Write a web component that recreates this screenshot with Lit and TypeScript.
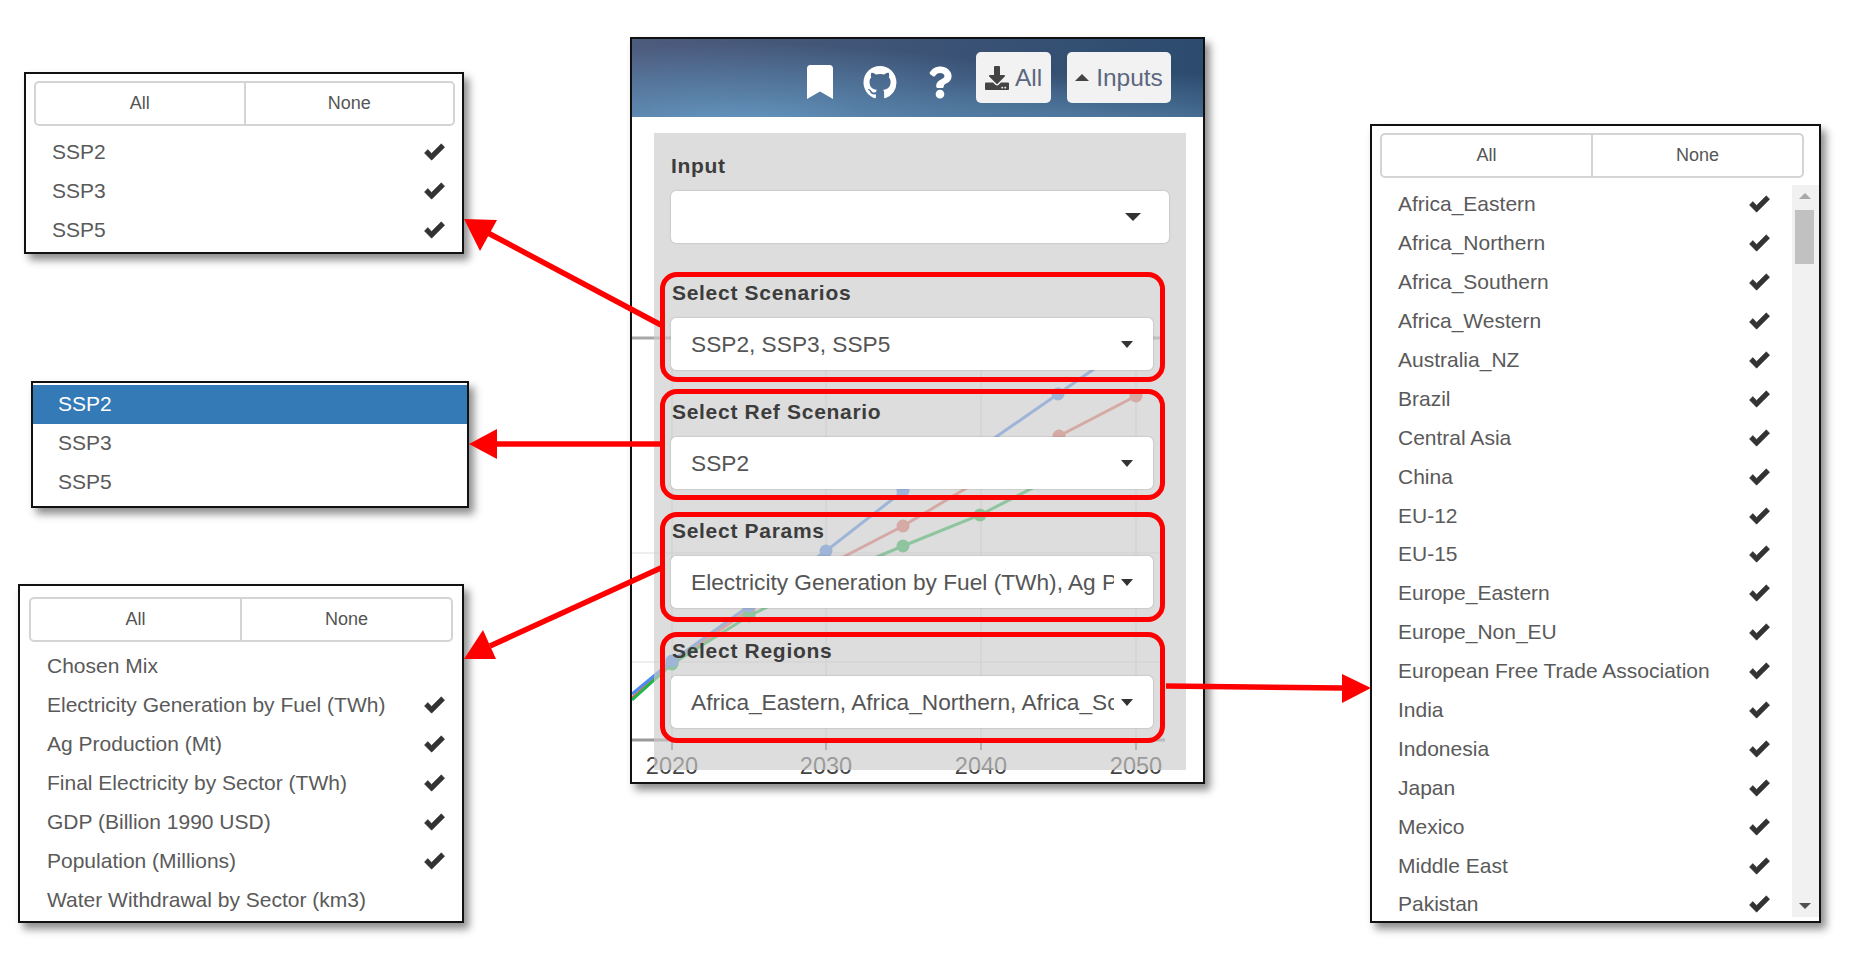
import { LitElement, html, css, svg } from 'lit';
import { customElement } from 'lit/decorators.js';

const SCENARIOS = ['SSP2', 'SSP3', 'SSP5'];
const PARAMS: [string, boolean][] = [
  ['Chosen Mix', false],
  ['Electricity Generation by Fuel (TWh)', true],
  ['Ag Production (Mt)', true],
  ['Final Electricity by Sector (TWh)', true],
  ['GDP (Billion 1990 USD)', true],
  ['Population (Millions)', true],
  ['Water Withdrawal by Sector (km3)', false],
];
const REGIONS = [
  'Africa_Eastern', 'Africa_Northern', 'Africa_Southern', 'Africa_Western', 'Australia_NZ',
  'Brazil', 'Central Asia', 'China', 'EU-12', 'EU-15', 'Europe_Eastern', 'Europe_Non_EU',
  'European Free Trade Association', 'India', 'Indonesia', 'Japan', 'Mexico', 'Middle East', 'Pakistan',
];

// chart series, in page coordinates
const SERIES: { color: string; pts: number[][] }[] = [
  { color: '#e86a5c', pts: [[632, 698], [672, 663], [749, 610], [826, 566], [903, 526], [980, 480], [1059, 436], [1136, 396]] },
  { color: '#1fb84a', pts: [[632, 700], [672, 664], [749, 616], [826, 578], [903, 546], [980, 515], [1058, 475]] },
  { color: '#4a8cf0', pts: [[632, 694], [672, 661], [749, 606], [826, 551], [903, 491], [980, 448], [1058, 394], [1136, 340]] },
];
const YEARS: [string, number][] = [['2020', 672], ['2030', 826], ['2040', 981], ['2050', 1136]];

@customElement('app-root')
export class AppRoot extends LitElement {
  static styles = css`
    :host {
      display: block;
      position: relative;
      width: 1851px;
      height: 954px;
      overflow: hidden;
      background: #fff;
      font-family: 'Liberation Sans', Arial, sans-serif;
      color: #555;
    }

    /* the figure is a free canvas: each window sits at its own place */
    .win {
      position: absolute;
      box-sizing: border-box;
      background: #fff;
      border: 2px solid #111;
      box-shadow: 5px 6px 8px rgba(0, 0, 0, 0.45);
      overflow: hidden;
    }
    .pop-scen { left: 24px; top: 72px; width: 440px; height: 182px; padding: 7px 8px; }
    .pop-ref { left: 31px; top: 381px; width: 438px; height: 127px; padding-top: 2px; }
    .pop-params { left: 18px; top: 584px; width: 446px; height: 339px; padding: 11px 9px; }
    .pop-regions { left: 1370px; top: 124px; width: 451px; height: 799px; padding: 7px 8px; }
    .main { left: 630px; top: 37px; width: 575px; height: 747px; }

    .btns {
      display: flex;
      height: 45px;
      box-sizing: border-box;
      border: 2px solid #d4d4d4;
      border-radius: 5px;
      margin-bottom: 7px;
      width: 421px;
    }
    .pop-params .btns { width: 424px; margin-bottom: 5px; }
    .pop-regions .btns { width: 424px; }
    .btns span {
      flex: 1;
      display: flex;
      align-items: center;
      justify-content: center;
      font-size: 18px;
      color: #555;
    }
    .btns span + span { border-left: 2px solid #d4d4d4; }

    .row {
      display: flex;
      align-items: center;
      height: 38.97px;
      font-size: 21px;
      padding-left: 18px;
      color: #5a5a5a;
      white-space: nowrap;
    }
    .row .name { flex: 1; }
    .row svg { width: 21px; height: 18px; fill: #333; stroke: #333; stroke-width: 0.6; stroke-linejoin: round; margin-right: 9px; }
    .pop-params .row svg { margin-right: 8px; }

    .pop-ref .row { padding-left: 25px; }
    .pop-ref .row.on { background: #337ab7; color: #fff; }

    .regions { display: flex; height: 732px; }
    .regions .list { flex: 1; overflow: hidden; }
    .regions .row { height: 38.9px; }
    .regions .row svg { margin-right: 22px; }
    .scroll {
      position: relative;
      width: 27px;
      margin-right: -8px;
      background: #f1f1f1;
    }
    .scroll i {
      position: absolute;
      left: 7px;
      border: 6px solid transparent;
      border-top: 0;
    }
    .scroll .up { top: 8px; border-bottom: 6px solid #a8a8a8; }
    .scroll .down { bottom: 8px; border-bottom: 0; border-top: 6px solid #505050; }
    .scroll b {
      position: absolute;
      left: 3px;
      width: 19px;
      top: 25px;
      height: 54px;
      background: #c1c1c1;
    }

    .chart { position: absolute; left: 0; top: 0; width: 571px; height: 743px; }
    .chart text { font-size: 23.5px; fill: #444; text-anchor: middle; }

    header {
      position: relative;
      display: flex;
      align-items: center;
      justify-content: flex-end;
      height: 78px;
      padding-right: 32px;
      box-sizing: border-box;
      background:
        radial-gradient(ellipse 70% 110% at 18% 115%, #659ac4 0, rgba(101, 154, 196, 0) 100%),
        radial-gradient(ellipse 50% 90% at 85% 130%, #5b86ad 0, rgba(91, 134, 173, 0) 100%),
        linear-gradient(100deg, #4d5b7d, #2b4b6e);
    }
    header svg.ico { fill: #fff; display: block; }
    .ico-book { width: 26px; height: 34px; margin: 8px 30px 0 0; }
    .ico-git { width: 34px; height: 33px; margin: 8px 31px 0 0; }
    .ico-help { width: 24px; height: 33px; margin: 8px 24px 0 0; }
    .hbtn {
      display: flex;
      align-items: center;
      justify-content: center;
      height: 51px;
      margin-top: -1px;
      background: #f2f2f2;
      border-radius: 5px;
      color: #5c6780;
      font-size: 24.5px;
    }
    .hbtn.all { width: 75px; margin-right: 16px; gap: 6px; }
    .hbtn.all svg { width: 24px; height: 24px; fill: #444; }
    .hbtn.inputs { width: 104px; gap: 7px; }
    .hbtn.inputs i {
      border: 7px solid transparent;
      border-top: 0;
      border-bottom: 7px solid #444;
    }

    .panel {
      position: relative;
      box-sizing: border-box;
      width: 532px;
      height: 637px;
      margin: 16px 0 0 22px;
      padding: 21px 0 0 6px;
      background: rgba(203, 203, 203, 0.65);
    }
    label {
      display: block;
      height: 24px;
      line-height: 24px;
      font-size: 21px;
      font-weight: bold;
      letter-spacing: 0.7px;
      color: #3c3c3c;
      white-space: nowrap;
    }
    .input-group { width: 498px; margin: 0 0 29px 11px; }
    .select {
      display: flex;
      align-items: center;
      box-sizing: border-box;
      height: 52px;
      margin-top: 13px;
      padding: 0 20px;
      background: #fff;
      border-radius: 5px;
      box-shadow: 0 0 2px rgba(0, 0, 0, 0.25);
      font-size: 22.7px;
      color: #555;
    }
    .select .val { flex: 1; overflow: hidden; white-space: nowrap; margin-right: 7px; }
    .select i {
      flex: none;
      border: 6px solid transparent;
      border-bottom: 0;
      border-top: 7px solid #333;
    }
    .input-group .select { padding-right: 28px; }
    .input-group .select i { border-width: 8px 8px 0; }

    .group {
      box-sizing: border-box;
      width: 505px;
      height: 110px;
      padding: 4px 7px 0 6px;
      border: 5px solid #f00;
      border-radius: 17px;
    }
    .group label { margin-left: 1px; }
    .group.ref { margin-top: 7px; height: 111px; padding-top: 6px; }
    .group.params { margin-top: 12px; padding-top: 2px; }
    .group.regions-box { margin-top: 10px; height: 111px; padding-top: 2px; }

    .arrows { position: absolute; left: 0; top: 0; width: 1851px; height: 954px; pointer-events: none; }
  `;

  private check() {
    return html`<svg viewBox="0 0 21 18"><path d="M.5 10 3.8 6.6 7.6 10.4 17.3.8 20.6 4.2 7.6 17.2Z"></path></svg>`;
  }

  private allNone() {
    return html`<div class="btns"><span>All</span><span>None</span></div>`;
  }

  private row(name: string, checked: boolean) {
    return html`<div class="row"><span class="name">${name}</span>${checked ? this.check() : ''}</div>`;
  }

  private select(value: string) {
    return html`<div class="select"><span class="val">${value}</span><i></i></div>`;
  }

  private renderChart() {
    return html`
      <svg class="chart" viewBox="632 39 571 743">
        <g fill="none">
          <path d="M632 553H1165M632 662H1165" stroke="#eee" stroke-width="2"></path>
          ${YEARS.map(([, x]) => svg`<path d="M${x} 340V740" stroke="#d8d8d8" stroke-width="1"></path>`)}
          <path d="M632 338H1165" stroke="#a8a8a8" stroke-width="3"></path>
          <path d="M632 740H1165" stroke="#9a9a9a" stroke-width="3"></path>
          ${YEARS.map(([, x]) => svg`<path d="M${x} 741V750" stroke="#888" stroke-width="2"></path>`)}
        </g>
        ${SERIES.map((s) => svg`
          <polyline points=${s.pts.map((p) => p.join(',')).join(' ')} fill="none" stroke=${s.color} stroke-width="3"></polyline>
          ${s.pts.slice(1).map((p) => svg`<circle cx=${p[0]} cy=${p[1]} r="6.5" fill=${s.color}></circle>`)}
        `)}
        ${YEARS.map(([t, x]) => svg`<text x=${x} y="774">${t}</text>`)}
      </svg>
    `;
  }

  private renderArrows() {
    return html`
      <svg class="arrows" viewBox="0 0 1851 954">
        <g stroke="#f00" stroke-width="5.5" fill="#f00">
          <line x1="661" y1="325" x2="488" y2="233"></line>
          <line x1="661" y1="444" x2="495" y2="444"></line>
          <line x1="663" y1="567" x2="490" y2="646"></line>
          <line x1="1166" y1="686" x2="1342" y2="688"></line>
        </g>
        <g fill="#f00">
          <polygon points="464,219 497,220 480,251"></polygon>
          <polygon points="469,444 497,429 497,459"></polygon>
          <polygon points="464,659 483,630 496,659"></polygon>
          <polygon points="1371,688 1342,674 1342,703"></polygon>
        </g>
      </svg>
    `;
  }

  render() {
    return html`
      <div class="win pop-scen">
        ${this.allNone()}
        ${SCENARIOS.map((s) => this.row(s, true))}
      </div>

      <div class="win pop-ref">
        ${SCENARIOS.map((s, i) => html`<div class="row ${i === 0 ? 'on' : ''}">${s}</div>`)}
      </div>

      <div class="win pop-params">
        ${this.allNone()}
        ${PARAMS.map(([name, on]) => this.row(name, on))}
      </div>

      <div class="win pop-regions">
        ${this.allNone()}
        <div class="regions">
          <div class="list">${REGIONS.map((r) => this.row(r, true))}</div>
          <div class="scroll"><i class="up"></i><b></b><i class="down"></i></div>
        </div>
      </div>

      <div class="win main">
        ${this.renderChart()}
        <header>
          <svg class="ico ico-book" viewBox="0 0 384 512" preserveAspectRatio="none"><path d="M0 512V48C0 21.49 21.49 0 48 0h288c26.51 0 48 21.49 48 48v464L192 400 0 512z"></path></svg>
          <svg class="ico ico-git" viewBox="0 0 16 16"><path d="M8 0C3.58 0 0 3.58 0 8c0 3.54 2.29 6.53 5.47 7.59.4.07.55-.17.55-.38 0-.19-.01-.82-.01-1.49-2.01.37-2.53-.49-2.69-.94-.09-.23-.48-.94-.82-1.13-.28-.15-.68-.52-.01-.53.63-.01 1.08.58 1.23.82.72 1.21 1.87.87 2.33.66.07-.52.28-.87.51-1.07-1.78-.2-3.64-.89-3.64-3.95 0-.87.31-1.59.82-2.15-.08-.2-.36-1.02.08-2.12 0 0 .67-.21 2.2.82.64-.18 1.32-.27 2-.27.68 0 1.36.09 2 .27 1.53-1.04 2.2-.82 2.2-.82.44 1.1.16 1.92.08 2.12.51.56.82 1.27.82 2.15 0 3.07-1.87 3.75-3.65 3.95.29.25.54.73.54 1.48 0 1.07-.01 1.93-.01 2.2 0 .21.15.46.55.38A8.013 8.013 0 0016 8c0-4.42-3.58-8-8-8z"></path></svg>
          <svg class="ico ico-help" viewBox="0 0 384 512"><path d="M202.021 0C122.202 0 70.503 32.703 29.914 91.026c-7.363 10.58-5.093 25.086 5.178 32.874l43.138 32.709c10.373 7.865 25.132 6.026 33.253-4.148 25.049-31.381 43.63-49.449 82.757-49.449 30.764 0 68.816 19.799 68.816 49.631 0 22.552-18.617 34.134-48.993 51.164-35.423 19.86-82.299 44.576-82.299 106.405V320c0 13.255 10.745 24 24 24h72.471c13.255 0 24-10.745 24-24v-5.773c0-42.86 125.268-44.645 125.268-160.627C377.504 66.256 286.902 0 202.021 0zM192 373.459c-38.196 0-69.271 31.075-69.271 69.271 0 38.195 31.075 69.27 69.271 69.27s69.271-31.075 69.271-69.271-31.075-69.27-69.271-69.27z"></path></svg>
          <div class="hbtn all">
            <svg viewBox="0 0 512 512"><path d="M216 0h80c13.3 0 24 10.7 24 24v168h87.7c17.8 0 26.7 21.5 14.1 34.1L269.7 378.3c-7.5 7.5-19.8 7.5-27.3 0L90.1 226.1c-12.6-12.6-3.7-34.1 14.1-34.1H192V24c0-13.3 10.7-24 24-24zm296 376v112c0 13.3-10.7 24-24 24H24c-13.3 0-24-10.7-24-24V376c0-13.3 10.7-24 24-24h146.7l49 49c20.1 20.1 52.5 20.1 72.6 0l49-49H488c13.3 0 24 10.7 24 24zm-124 88c0-11-9-20-20-20s-20 9-20 20 9 20 20 20 20-9 20-20zm64 0c0-11-9-20-20-20s-20 9-20 20 9 20 20 20 20-9 20-20z"></path></svg>
            All
          </div>
          <div class="hbtn inputs"><i></i>Inputs</div>
        </header>
        <div class="panel">
          <div class="input-group">
            <label>Input</label>
            ${this.select('')}
          </div>
          <div class="group"><label>Select Scenarios</label>${this.select('SSP2, SSP3, SSP5')}</div>
          <div class="group ref"><label>Select Ref Scenario</label>${this.select('SSP2')}</div>
          <div class="group params"><label>Select Params</label>${this.select('Electricity Generation by Fuel (TWh), Ag Production (Mt)')}</div>
          <div class="group regions-box"><label>Select Regions</label>${this.select('Africa_Eastern, Africa_Northern, Africa_Southern')}</div>
        </div>
      </div>

      ${this.renderArrows()}
    `;
  }
}
